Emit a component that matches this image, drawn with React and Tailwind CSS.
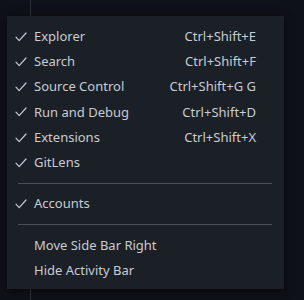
import React from "react";

const Check = () => (
  <svg width="12" height="10" viewBox="0 0 12 10" fill="none" className="block">
    <path d="M1 5.2 L4.2 8.6 L11 1" stroke="#c5cad3" strokeWidth="1.2" strokeLinecap="round" strokeLinejoin="round" />
  </svg>
);

const Item = ({ checked, label, shortcut }) => (
  <div className="flex h-[25.25px] items-center text-[13px] text-[#c8ccd4]">
    <div className="flex w-[27px] shrink-0 justify-end pr-[7px]">{checked ? <Check /> : null}</div>
    <div className="flex-1 whitespace-nowrap">{label}</div>
    {shortcut ? <div className="whitespace-nowrap pr-[28px]">{shortcut}</div> : null}
  </div>
);

const Sep = () => (
  <div className="py-[7.5px] pl-[11px] pr-[12px]">
    <div className="h-px bg-[#4b4f56]" />
  </div>
);

export default function App() {
  return (
    <div
      className="flex h-[300px] w-[304px] flex-col bg-[#0e1117]"
      style={{ fontFamily: '"Noto Sans", "Open Sans", sans-serif' }}
    >
      <div className="flex h-[16px] shrink-0">
        <div className="ml-[30px] w-px bg-[#2a2f37]" />
      </div>
      <div className="ml-[7px] h-[273px] w-[277px] shrink-0 bg-[#1b1f26] pt-[8px] shadow-[0_2px_8px_rgba(0,0,0,0.5)]">
        <Item checked label="Explorer" shortcut="Ctrl+Shift+E" />
        <Item checked label="Search" shortcut="Ctrl+Shift+F" />
        <Item checked label="Source Control" shortcut="Ctrl+Shift+G G" />
        <Item checked label="Run and Debug" shortcut="Ctrl+Shift+D" />
        <Item checked label="Extensions" shortcut="Ctrl+Shift+X" />
        <Item checked label="GitLens" />
        <Sep />
        <Item checked label="Accounts" />
        <Sep />
        <Item label="Move Side Bar Right" />
        <Item label="Hide Activity Bar" />
      </div>
      <div className="flex flex-1">
        <div className="ml-[30px] w-px bg-[#2a2f37]" />
      </div>
    </div>
  );
}
